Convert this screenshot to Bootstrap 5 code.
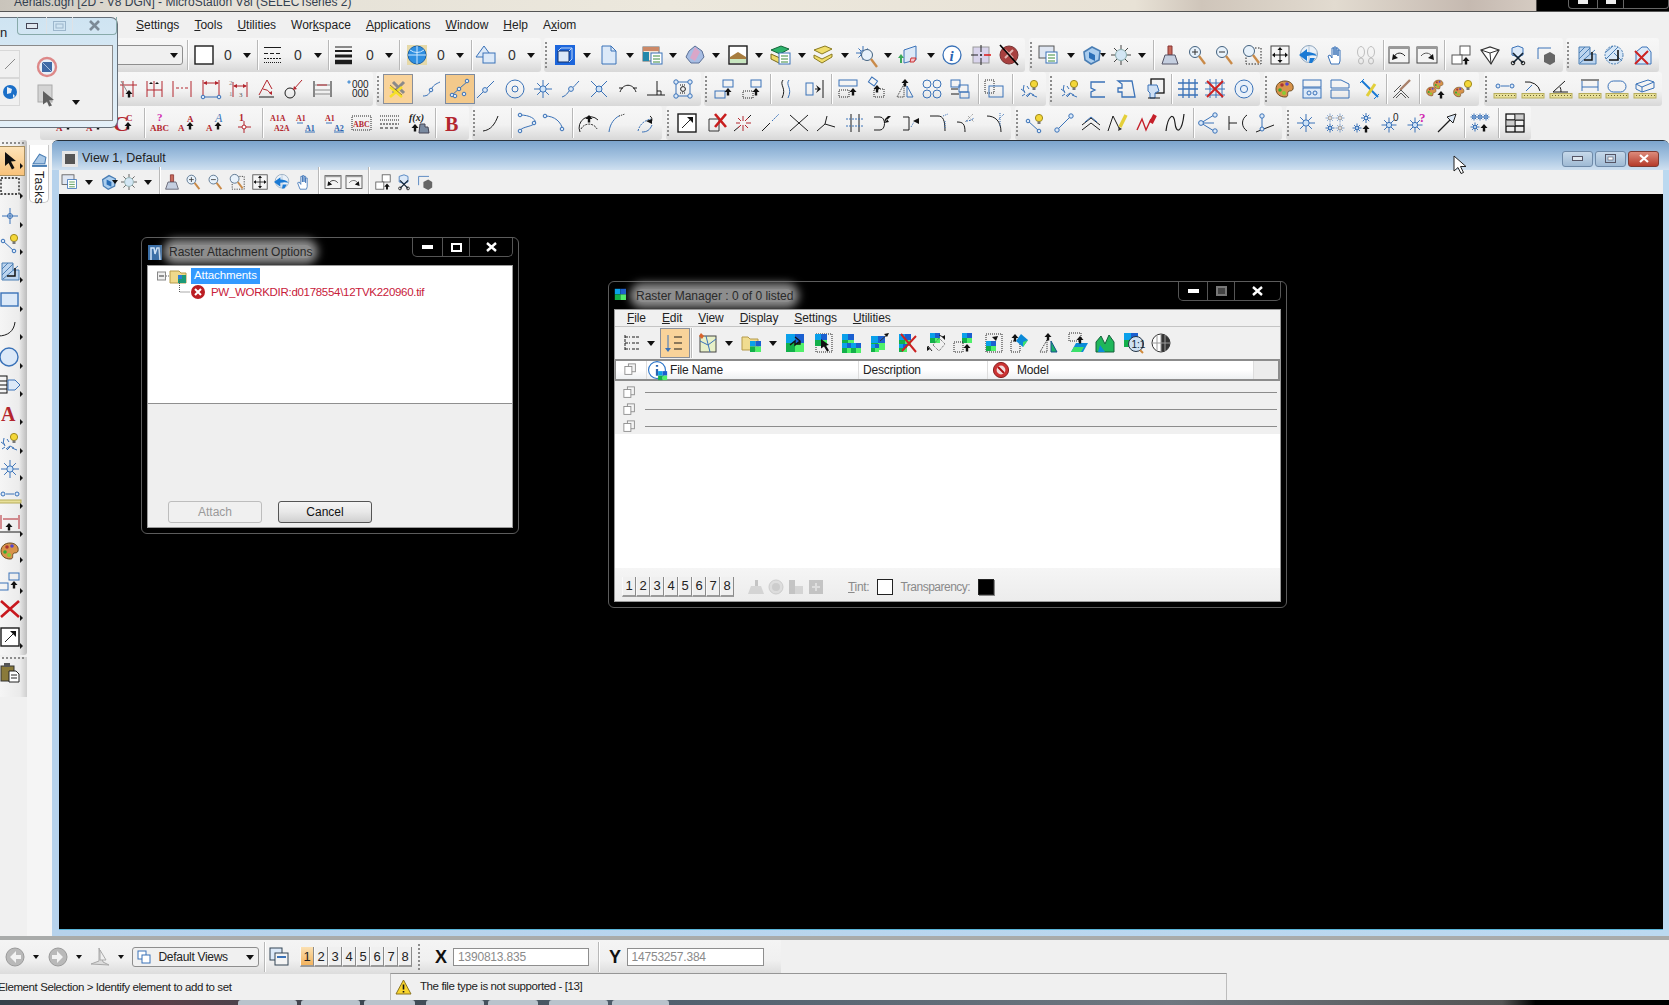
<!DOCTYPE html>
<html lang="en">
<head>
  <meta charset="UTF-8" />
  <title>Aerials.dgn [2D - V8 DGN] - MicroStation V8i (SELECTseries 2)</title>
  <link href="https://cdn.jsdelivr.net/npm/bootstrap@5.3.3/dist/css/bootstrap.min.css" rel="stylesheet">
  <style>
    html, body { width: 1669px; height: 1005px; margin: 0; overflow: hidden; }
    body { font-family: "Liberation Sans", Arial, sans-serif; font-size: 12px; color: #222; background: #f0f0f0; line-height: 1; }

    .titlestrip { height: 12px; overflow: hidden; padding-left: 14px; font-size: 12px; color: #33404f;
      background: linear-gradient(90deg, #c9c4bb 0, #e4e0d6 10%, #ece8dd 40%, #e8e2d6 68%, #cfc5ba 72%, #e2dbd0 80%, #c5b9b0 88%, #d5cbc2 92%, #000 92.1%); border-bottom: 1px solid #555; }
    .titlestrip > span { margin-top: -4px; display: block; white-space: nowrap; }
    .top-btns { width: 101px; height: 9px; border: 1px solid #666; border-top: 0; border-radius: 0 0 4px 4px; }
    .top-btns div { border-left: 1px solid #666; height: 100%; display: flex; justify-content: center; }
    .top-btns div:first-child { border-left: 0; }
    .top-btns i { display: block; width: 10px; height: 4px; background: #eee; }
    .menubar { height: 26px; padding-left: 136px; gap: 15px; font-size: 12px; }
    .menubar a { color: #222; text-decoration: none; }
    .tb-row { height: 34px; }
    .tb-group { height: 34px; flex: none; background: linear-gradient(#f7f7f7, #f2f2f2 55%, #d8d8d8); border-radius: 3px; }
    .cell { flex: none; display: flex; align-items: center; justify-content: center; }
    .tb-sep { width: 1px; height: 30px; background: #b8b8b8; box-shadow: 1px 0 0 #fff; }
    .tb-grip { width: 2px; height: 26px; background: repeating-linear-gradient(#8c8c8c 0 2px, transparent 2px 4px); }
    .caret { width: 0; height: 0; border: 4px solid transparent; border-top: 5px solid #111; border-bottom: 0; }
    .caret-sm { border-width: 3px; border-top-width: 4px; border-bottom: 0; }
    .zero { color: #333; font-size: 14px; }
    .ic { display: block; fill: none; overflow: visible; flex: none; }
    .ic .b { stroke: #3a72b8; }
    .ic .bl { stroke: #3a72b8; fill: #dce9f8; }
    .ic .k { stroke: #1c1c1c; }
    .ic .r { stroke: #b3262e; }
    .ic .g { stroke: #8a8a8a; }
    .ic .kf { fill: #111; }
    .ic .rf { fill: #b3262e; }
    .ic .w { fill: #fff; }
    .ic text { font-family: "Liberation Serif", serif; stroke: none; }
    .on { background: #f9d39a; box-shadow: 0 0 0 4px #f9d39a, 0 0 0 5px #8a8f9a; }
    .snap-on { background: #f3c98b; box-shadow: 0 0 0 4px #f3c98b, 0 0 0 5px #7b8aa0; }

    .combo { height: 20px; border: 1px solid #8e8e8e; border-radius: 3px; background: #f0f0f0; padding: 0 4px; display: flex; align-items: center; justify-content: space-between; font-size: 12px; }

    .workspace { height: 800px; border-bottom: 4px solid #a9abaa; }
    .palette-col { width: 27px; flex: none; }
    .pal-a { height: 515px; padding-top: 1px; background: linear-gradient(90deg, #f5f5f5, #ececec 70%, #bcbcbc); border-radius: 0 3px 3px 0; }
    .pal-b { height: 40px; margin-top: 2px; background: linear-gradient(90deg, #f5f5f5, #eaeaea 75%, #cfcfcf); }
    .pal-grip { height: 2px; margin: 1px 2px; background: repeating-linear-gradient(90deg, #8c8c8c 0 2px, transparent 2px 4px); }
    .pal-cell { position: relative; width: 27px; height: 20px; }
    .pal-cell::after { content: ""; position: absolute; left: 20px; top: 16px; border: 3px solid transparent; border-left: 3px solid #111; }
    .pal-cell.plain::after { display: none; }
    .pal-first { width: 24px; height: 28px; padding-top: 4px; background: linear-gradient(#fde3b8, #f9c27a); outline: 1px solid #a98f60; }
    .tasks-col { width: 25px; flex: none; background: #f5f5f5; padding: 5px 3px 0 2px; }
    .tasks-tab { height: 58px; background: #fff; border: 1px solid #c8c8c8; border-top: 0; border-radius: 0 0 5px 5px; padding-top: 3px; }
    .tasks-tab span { writing-mode: vertical-rl; font-size: 12px; letter-spacing: .5px; margin-top: 3px; }

    .view { background: linear-gradient(90deg, #b6d2ec, #bcd9f0); border-top: 1px solid #26303a; border-radius: 6px 6px 0 0; min-width: 0; }
    .view-title { height: 29px; background: linear-gradient(#7ba4cd, #a9c6e2 60%, #cfe0f0); border-radius: 5px 5px 0 0; padding: 6px 10px 0 13px; font-size: 12.5px; }
    .view-title .sq { width: 10px; height: 10px; background: #555; outline: 3px solid #e6e6e6; margin-right: 7px; }
    .win-btn { width: 31px; height: 16px; border: 1px solid #6f8aa8; border-radius: 3px; background: linear-gradient(#c7d9ea, #9fbad4); margin-left: 2px; }
    .win-btn.close { background: linear-gradient(#dd8b7b, #b53b2b); border-color: #7d3a32; }
    .view-body { margin: 0 6px 7px 7px; min-height: 0; box-shadow: 0 1px 0 #5ab5d9; }
    .view-tools { height: 24px; flex: none; background: #f0f0f0; }
    .canvas { background: #000; }

    .dlg { position: absolute; background: #000; border: 1px solid #5c5c5c; border-radius: 6px; padding: 0 5px 5px; display: flex; flex-direction: column; }
    .dlg-head { height: 27px; flex: none; color: #2a2a2a; }
    .glow { background: #8d8d8d; box-shadow: 0 0 9px 6px #8d8d8d; border-radius: 8px; margin-left: 6px; font-size: 12px; height: 13px; display: flex; align-items: center; }
    .glass-btns { height: 19px; border: 1px solid #555; border-top: 0; border-radius: 0 0 5px 5px; margin-left: auto; align-self: flex-start; }
    .glass-btns div { display: flex; align-items: center; justify-content: center; border-left: 1px solid #555; height: 100%; }
    .glass-btns div:first-child { border-left: 0; }
    .client { background: #fff; border: 1px solid #9a9a9a; min-height: 0; }

    .tree { height: 138px; flex: none; border-bottom: 1px solid #8f8f8f; background: #fff; padding: 2px 0 0 9px; }
    .tree-sel { background: #3399ff; color: #fff; padding: 2px 3px; font-size: 11.5px; height: 16px; margin-left: 1px; letter-spacing: -.1px; }
    .tree-err { color: #c8203a; font-size: 11.5px; letter-spacing: -.3px; }
    .dlg-foot { background: #efefef; padding: 0 0 4px 20px; gap: 16px; }
    .dlg-foot .btn { width: 94px; height: 22px; padding: 0; font-size: 12px; border-radius: 3px; line-height: 1; }
    .btn-cancel { background: linear-gradient(#f5f5f5, #e8e8e8 50%, #d0d0d0); border: 1px solid #555; color: #111; }
    .btn-attach { background: #f0f0f0; border: 1px solid #bdbdbd; color: #9a9a9a; }
    .btn-attach:disabled { background: #f0f0f0; border-color: #bdbdbd; color: #9a9a9a; opacity: 1; }

    .rm-menu { height: 17px; flex: none; padding-left: 12px; background: #f0f0f0; border-bottom: 1px solid #c4c4c4; font-size: 12px; letter-spacing: -.1px; }
    .rm-menu a { color: #222; text-decoration: none; }
    .rm-tools { height: 32px; flex: none; background: #f0f0f0; }
    .rm-head { height: 22px; flex: none; background: linear-gradient(#fff, #fff 50%, #eef0f2); border: 2px solid #8c8c8c; border-left: 1px solid #8c8c8c; font-size: 12px; letter-spacing: -.2px; }
    .rm-head .h { height: 100%; display: flex; align-items: center; border-right: 1px solid #ddd; }
    .rm-rows { height: 53px; flex: none; background: #f0f0f0; padding: 3px 3px 0 8px; }
    .rm-row { height: 17px; }
    .rm-row hr { flex: 1; margin: 0 0 0 8px; border: 0; border-top: 1px solid #8c8c8c; opacity: 1; }
    .rm-foot { height: 33px; flex: none; background: linear-gradient(#f5f5f5, #ececec); padding: 4px 0 0 7px; color: #8a8a8a; }
    .num { width: 14px; height: 20px; display: flex; align-items: center; justify-content: center; font-size: 13px; color: #222; background: #f0f0f0; border-right: 1px solid #8a8a8a; border-bottom: 2px solid #9a9a9a; border-left: 1px solid #f9f9f9; }
    .swatch { width: 16px; height: 16px; border: 1px solid #222; background: #fff; }
    .swatch-k { background: #000; box-shadow: 1px 1px 0 #888; }

    .float-win { position: absolute; left: 0; top: 17px; width: 118px; height: 111px; background: linear-gradient(#cfe4f2, #e4f0f8); border: 1px solid #66707a; border-left: 0; border-radius: 0 7px 7px 0; z-index: 5; }
    .float-head { height: 27px; font-size: 13px; }
    .float-btns { height: 18px; width: 102px; margin-left: 10px; margin-top: -1px; border: 1px solid #8aa; border-top: 0; border-radius: 0 0 4px 4px; }
    .float-body { position: relative; height: 76px; width: 113px; padding-top: 4px; background: #f0f0f0; border: 1px solid #8a8a8a; border-left: 0; }
    .float-cell { width: 20px; height: 28px; border: 1px solid #d8d8d8; border-left: 0; }

    .mouse { position: absolute; left: 1453px; top: 155px; z-index: 6; }

    .bottom-tools { height: 34px; background: #f0f0f0; }
    .bt-group { background: linear-gradient(#f4f4f4, #f0f0f0 60%, #dcdcdc); height: 34px; }
    .coord { width: 136px; height: 18px; padding: 0 4px; border: 1px solid #8e8e8e; border-radius: 0; font-size: 12px; color: #8a8a8a; background: #fff; letter-spacing: -.2px; }
    .coord:disabled { background: #fff; opacity: 1; }
    .axis { font-size: 18px; font-weight: 700; color: #111; }
    .statusbar { height: 26px; background: #f0f0f0; font-size: 11.5px; letter-spacing: -.4px; }
    .status-l { width: 392px; flex: none; overflow: hidden; padding-top: 2px; margin-left: -2px; }
    .status-m { width: 837px; flex: none; border-top: 1px solid #969696; border-left: 1px solid #bcbcbc; border-right: 1px solid #bcbcbc; margin-top: -1px; padding-left: 4px; gap: 8px; }
    .taskbar { height: 5px; background: linear-gradient(90deg, #35404a, #5a3f48 10%, #3b4650 20%, #51606e 40%, #6f7780 70%, #555 90%, #000 92%); padding-left: 238px; gap: 4px; }
    .taskbar div { height: 5px; background: #b9c3cc; border-radius: 3px 3px 0 0; }
  </style>
</head>
<body>

  <!-- title strip cut by the top of the picture -->
  <div class="titlestrip d-flex">
    <span>Aerials.dgn [2D - V8 DGN] - MicroStation V8i (SELECTseries 2)</span>
    <div class="top-btns d-flex ms-auto">
      <div style="width:28px"><i></i></div><div style="width:26px"><i></i></div><div class="flex-fill"></div>
    </div>
  </div>

  <!-- main menu -->
  <nav class="menubar d-flex align-items-center">
    <a href="#"><u>S</u>ettings</a>
    <a href="#"><u>T</u>ools</a>
    <a href="#"><u>U</u>tilities</a>
    <a href="#">Wor<u>k</u>space</a>
    <a href="#"><u>A</u>pplications</a>
    <a href="#"><u>W</u>indow</a>
    <a href="#"><u>H</u>elp</a>
    <a href="#">A<u>x</u>iom</a>
  </nav>

  <!-- tool bars, filled from the tables at the bottom -->
  <div class="tb-row d-flex" id="row1"></div>
  <div class="tb-row d-flex" id="row2"></div>
  <div class="tb-row d-flex" id="row3"></div>

  <div class="workspace d-flex">
    <div class="palette-col">
      <div class="pal-a"><div class="pal-grip"></div><div id="pal"></div></div>
      <div class="pal-b"><div class="pal-grip"></div><div id="pal2"></div></div>
    </div>
    <div class="tasks-col">
      <div class="tasks-tab d-flex flex-column align-items-center">
        <span data-i="tasks"></span>
        <span>Tasks</span>
      </div>
    </div>

    <div class="view flex-fill d-flex flex-column">
      <div class="view-title d-flex align-items-center flex-none">
        <div class="sq"></div>
        <div>View 1, Default</div>
        <div class="win-btn d-flex align-items-center justify-content-center ms-auto"><svg width="11" height="5"><rect x=".5" y=".5" width="10" height="4" fill="#dfe7ef" stroke="#556"/></svg></div>
        <div class="win-btn d-flex align-items-center justify-content-center"><svg width="11" height="9"><rect x=".5" y=".5" width="10" height="8" fill="none" stroke="#556"/><rect x="3" y="3" width="5" height="3" fill="#fff" stroke="#556" stroke-width=".6"/></svg></div>
        <div class="win-btn close d-flex align-items-center justify-content-center"><svg width="12" height="9"><path d="M2 1l8 7M10 1l-8 7" stroke="#fff" stroke-width="2.2"/></svg></div>
      </div>
      <div class="view-body flex-fill d-flex flex-column">
        <div class="view-tools d-flex" id="viewtools"></div>
        <div class="canvas flex-fill position-relative">

          <!-- Raster Attachment Options -->
          <div class="dlg" style="left:82px;top:43px;width:378px;height:297px">
            <div class="dlg-head d-flex align-items-center">
              <span data-i="mslogo"></span>
              <div class="glow">Raster Attachment Options</div>
              <div class="glass-btns d-flex" style="width:101px">
                <div style="width:29px"><svg width="11" height="4"><rect width="11" height="4" fill="#fff"/></svg></div>
                <div style="width:27px"><svg width="11" height="9"><rect x="1" y="1" width="9" height="7" fill="none" stroke="#fff" stroke-width="2"/></svg></div>
                <div class="flex-fill"><svg width="11" height="10"><path d="M1 1l9 8M10 1l-9 8" stroke="#fff" stroke-width="2.4"/></svg></div>
              </div>
            </div>
            <div class="client flex-fill d-flex flex-column">
              <div class="tree">
                <div class="d-flex align-items-center">
                  <svg class="ic" width="33" height="16"><rect x=".5" y="4" width="8" height="8" fill="#f0f0f0" stroke="#888"/><path d="M2 8h5" stroke="#333"/><path d="M9 8h4" stroke="#666" stroke-dasharray="1 1"/><path d="M13 3h9l2 2h5v10H13z" fill="#efd98b" stroke="#b59a4b"/><rect x="21" y="7" width="8" height="8" fill="#1c9a78"/><rect x="21" y="7" width="4" height="4" fill="#2c7fd6"/></svg>
                  <div class="tree-sel d-flex align-items-center">Attachments</div>
                </div>
                <div class="d-flex align-items-center" style="height:17px">
                  <svg class="ic" width="32" height="17" style="margin-left:22px"><path d="M.5 -3v11h11" stroke="#555" stroke-dasharray="1 1"/><circle cx="19" cy="8" r="7" fill="#bb1e24"/><path d="M16 5l6 6M22 5l-6 6" stroke="#fff" stroke-width="2"/></svg>
                  <div class="tree-err">PW_WORKDIR:d0178554\12TVK220960.tif</div>
                </div>
              </div>
              <div class="dlg-foot flex-fill d-flex align-items-end">
                <button class="btn btn-attach" disabled>Attach</button>
                <button class="btn btn-cancel">Cancel</button>
              </div>
            </div>
          </div>

          <!-- Raster Manager -->
          <div class="dlg" style="left:549px;top:87px;width:679px;height:327px">
            <div class="dlg-head d-flex align-items-center">
              <span data-i="rastlogo"></span>
              <div class="glow">Raster Manager : 0 of 0 listed</div>
              <div class="glass-btns d-flex" style="width:103px">
                <div style="width:28px"><svg width="11" height="4"><rect width="11" height="4" fill="#fff"/></svg></div>
                <div style="width:27px"><svg width="11" height="10"><rect x="1" y="1" width="9" height="8" fill="#444" stroke="#777" stroke-width="2"/></svg></div>
                <div class="flex-fill"><svg width="11" height="10"><path d="M1 1l9 8M10 1l-9 8" stroke="#fff" stroke-width="2.4"/></svg></div>
              </div>
            </div>
            <div class="client flex-fill d-flex flex-column">
              <div class="rm-menu d-flex align-items-center">
                <a href="#"><u>F</u>ile</a>
                <a href="#" class="ms-3"><u>E</u>dit</a>
                <a href="#" class="ms-3"><u>V</u>iew</a>
                <a href="#" class="ms-3"><u>D</u>isplay</a>
                <a href="#" class="ms-3"><u>S</u>ettings</a>
                <a href="#" class="ms-3"><u>U</u>tilities</a>
              </div>
              <div class="rm-tools d-flex" id="rmtools"></div>
              <div class="rm-head d-flex align-items-center">
                <div class="h" style="width:31px;padding-left:8px"><span data-i="copies"></span></div>
                <div class="h" style="width:212px;padding-left:1px"><span data-i="filei" class="me-1"></span>File Name</div>
                <div class="h" style="width:129px;padding-left:4px">Description</div>
                <div class="h" style="width:266px;padding-left:5px"><span data-i="noentry" class="me-2"></span>Model</div>
                <div class="flex-fill align-self-stretch" style="background:#ececec"></div>
              </div>
              <div class="rm-rows">
                <div class="rm-row d-flex align-items-center"><span data-i="copies"></span><hr></div>
                <div class="rm-row d-flex align-items-center"><span data-i="copies"></span><hr></div>
                <div class="rm-row d-flex align-items-center"><span data-i="copies"></span><hr></div>
              </div>
              <div class="flex-fill"></div>
              <div class="rm-foot d-flex align-items-center">
                <div class="d-flex">
                  <div class="num">1</div><div class="num">2</div><div class="num">3</div><div class="num">4</div>
                  <div class="num">5</div><div class="num">6</div><div class="num">7</div><div class="num">8</div>
                </div>
                <div class="d-flex align-items-center gap-1" style="margin-left:14px;opacity:.5">
                  <span data-i="fade1"></span><span data-i="fade2"></span><span data-i="fade3"></span><span data-i="fade4"></span>
                </div>
                <div style="margin-left:24px;letter-spacing:-.3px"><u>T</u>int:</div>
                <div class="swatch" style="margin-left:8px"></div>
                <div style="margin-left:7px;letter-spacing:-.5px">Transparency:</div>
                <div class="swatch swatch-k" style="margin-left:8px"></div>
              </div>
            </div>
          </div>

        </div>
      </div>
    </div>
  </div>

  <div class="bottom-tools d-flex" id="bottom"></div>

  <div class="statusbar d-flex">
    <div class="status-l d-flex align-items-center">Element Selection &gt; Identify element to add to set</div>
    <div class="status-m d-flex align-items-center">
      <svg class="ic" width="17" height="16"><path d="M8.5 1L16 15H1z" fill="#f8d42c" stroke="#8a7320"/><path d="M8.5 5.5v5M8.5 12v1.6" stroke="#111" stroke-width="1.6"/></svg>
      <div>The file type is not supported - [13]</div>
    </div>
  </div>

  <div class="taskbar d-flex">
    <div style="width:59px"></div><div style="width:59px"></div><div style="width:51px"></div><div style="width:58px;margin-left:7px"></div>
    <div style="width:50px"></div><div style="width:59px;margin-left:7px"></div><div style="width:57px"></div>
  </div>

  <!-- floating settings window -->
  <div class="float-win">
    <div class="float-head d-flex">
      <span style="margin-top:8px">n</span>
      <div class="float-btns d-flex">
        <div class="d-flex align-items-center justify-content-center border-end" style="width:29px"><svg width="12" height="6"><rect x=".5" y=".5" width="11" height="5" fill="#dfe7ef" stroke="#445"/></svg></div>
        <div class="d-flex align-items-center justify-content-center border-end" style="width:26px"><svg width="13" height="10" opacity=".5"><rect x=".5" y=".5" width="12" height="9" fill="none" stroke="#6a8aa8"/><rect x="3" y="3" width="7" height="4" fill="none" stroke="#6a8aa8"/></svg></div>
        <div class="flex-fill d-flex align-items-center justify-content-center"><svg width="13" height="11"><path d="M2 1l9 9M11 1l-9 9" stroke="#7d8a96" stroke-width="2.6"/></svg></div>
      </div>
    </div>
    <div class="float-body d-flex">
      <div>
        <div class="float-cell d-flex align-items-center justify-content-center"><svg width="14" height="14"><path d="M2 12L12 2" stroke="#8a8a8a"/></svg></div>
        <div class="float-cell d-flex align-items-center justify-content-center"><span data-i="earth"></span></div>
      </div>
      <div class="d-flex flex-column align-items-center" style="margin:7px 0 0 17px;gap:7px">
        <span data-i="nosym"></span>
        <span data-i="grayptr"></span>
      </div>
      <div class="caret" style="margin:50px 0 0 15px"></div>
    </div>
  </div>

  <!-- mouse pointer -->
  <svg class="mouse" width="14" height="20"><path d="M1 1v15l4-3.5 3 6 2.5-1-3-6H13z" fill="#fff" stroke="#222"/></svg>

  <script>
    // little drawing helpers for the icons, all on a 20x20 box
    const up = (x, y) => `<path class="kf" d="M${x} ${y}l3.5 4H${x + 1.2}v3.5h-2.4V${y + 4}H${x - 3.5}z"/>`;
    const n = (x, y, r = 1.8) => `<circle class="bl" cx="${x}" cy="${y}" r="${r}"/>`;
    const lines = (cls, d, extra = '') => `<path class="${cls}" d="${d}" ${extra}/>`;
    const ruler = '<rect x="-1" y="14.5" width="22" height="4.5" fill="#e8e09a" stroke="#b7ad5b"/><path stroke="#6b6433" stroke-dasharray="1 2" d="M1 16.5h19"/>';
    const star = (x, y, s = 8) => `<path class="b" d="M${x - s} ${y}h${s * 2}M${x} ${y - s}v${s * 2}M${x - s * .65} ${y - s * .65}l${s * 1.3} ${s * 1.3}M${x + s * .65} ${y - s * .65}l${-s * 1.3} ${s * 1.3}"/><circle cx="${x}" cy="${y}" r="${s * .35}" fill="#cfe3f7" stroke="#3a72b8"/>`;
    const bulb = (x, y) => `<circle cx="${x}" cy="${y}" r="3.6" fill="#f4d738" stroke="#a08a1e"/><rect x="${x - 1.5}" y="${y + 3.4}" width="3" height="2.6" fill="#777"/>`;
    const tx = (x, y, s, fill, str, extra = '') => `<text x="${x}" y="${y}" font-size="${s}" fill="${fill}" ${extra}>${str}</text>`;
    const pal = '<path d="M10 2c6 0 9 4 8 8-1 3-4 1-5 3s1 5-3 5c-5 0-9-3-9-8s4-8 9-8z" fill="#d8934a" stroke="#6a4a20"/><circle cx="7" cy="6" r="1.8" fill="#a33"/><circle cx="12" cy="5" r="1.8" fill="#54c"/><circle cx="5" cy="11" r="1.8" fill="#3a3"/><circle cx="9" cy="14" r="2" fill="#8c3"/>';
    const rg = (x, y, s = 6) => `<rect x="${x}" y="${y}" width="${s}" height="${s}" fill="#0aa0ea"/><rect x="${x + s}" y="${y}" width="${s}" height="${s}" fill="#1a5fd0"/><rect x="${x}" y="${y + s}" width="${s}" height="${s}" fill="#12b04a"/><rect x="${x + s}" y="${y + s}" width="${s}" height="${s}" fill="#4ff06a"/>`;
    const list = (x, y) => `<rect x="${x}" y="${y}" width="11" height="11" fill="#fff" stroke="#3a72b8"/><path stroke="#3a8a3a" d="M${x + 2} ${y + 3}h7M${x + 2} ${y + 6}h7M${x + 2} ${y + 9}h7"/>`;
    const mag = (x, y) => `<circle cx="${x}" cy="${y}" r="5.5" fill="#e8f2fb" stroke="#42617f"/><path d="M${x + 4} ${y + 4}l6 8" stroke="#c98a48" stroke-width="2.4"/>`;

    const icons = {
      color: '<rect class="k w" x="1" y="1" width="18" height="18" stroke-width="1.4"/>',
      lstyle: lines('k', 'M1 2.5h17') + lines('k', 'M1 8.5h17', 'stroke-dasharray="4 2"') + lines('k', 'M1 13.5h17', 'stroke-dasharray="2 1"') + lines('k', 'M1 17.5h17', 'stroke-dasharray="1 1"'),
      weight: lines('k', 'M1 2h17') + lines('k', 'M1 6h17', 'stroke-width="2"') + lines('k', 'M1 11h17', 'stroke-width="3"') + lines('k', 'M1 17h17', 'stroke-width="4.5"'),
      globe: '<rect width="20" height="20" fill="#e6d9a8"/><circle cx="10" cy="10" r="9" fill="#2f8fe0" stroke="#1a5fa8"/><path stroke="#cfe8ff" d="M1 10h18M10 1v18M3 5q7 5 14 0"/>',
      tri: '<path class="bl" d="M8 1l8 11H0z"/><rect class="bl" x="7" y="8" width="12" height="10"/>',
      bluebox: '<rect x="0" y="0" width="20" height="20" fill="#1d66dc"/><rect x="3" y="6" width="11" height="11" fill="#dbe8f8" stroke="#12306a"/><path d="M3 6l3-3h11v11l-3 3M14 6l3-3" stroke="#bcd4f4"/>',
      doc: '<path class="bl" d="M3 1h9l5 5v13H3z"/><path class="b" d="M12 1v5h5"/>',
      refs: '<rect x="1" y="2" width="16" height="14" fill="#f4e6d8" stroke="#666"/><rect x="1" y="2" width="16" height="4" fill="#c86"/><rect x="1" y="7" width="6" height="9" fill="#28a"/>' + list(9, 8),
      blob: '<path d="M4 6l6-5 7 5 2 6-5 6-8 0-5-6z" fill="#a7bde3" stroke="#5a6f96"/><path d="M10 2l5 5-5 9-5-3z" fill="#d9a6c8"/>',
      pict: '<rect class="k w" x="1" y="1" width="18" height="18" stroke-width="1.4"/><path d="M2 12l8-5 8 5v6H2z" fill="#a87d3f"/><path d="M2 14h16v4H2z" fill="#c8e6c0"/>',
      greens: '<path d="M1 5l10-4 8 3-9 5z" fill="#2db36b" stroke="#14663a"/><path d="M1 9l9 4 4-1v4l-5 2-8-4z" fill="#ecd96a" stroke="#7a6a1e"/>' + list(9, 8),
      yellows: '<path d="M1 5l11-4 7 3-10 5z M1 10l8 4 10-5v3L9 18l-8-5z" fill="#f0dd6a" stroke="#8a7a20"/>',
      starmag: star(7, 8, 7) + mag(11, 10),
      views3: '<path class="bl" d="M6 5l12-4v14l-12 3z"/><path d="M3 9l3 4h-2v5H2v-5H0z" fill="#3aa85a"/><path d="M13 13h5l-2 4h-4z" fill="#f4c0c8" stroke="#c33"/>',
      info: '<circle class="b w" cx="10" cy="10" r="9" stroke-width="1.3"/>' + tx(7.5, 15.5, 15, '#2a63b0', 'i', 'font-style="italic" font-weight="700"'),
      cross: '<rect x="2" y="2" width="16" height="16" fill="#d9d4ec" stroke="#999"/><path stroke="#222" d="M10 0v7M10 13v7M0 10h7"/><path stroke="#d22" stroke-width="1.6" d="M13 10h7"/><circle cx="10" cy="10" r="1" fill="#111"/>',
      nope: '<circle cx="10" cy="10" r="9" fill="#a8403f" stroke="#733"/><path d="M6 5l8 8M14 5l-8 8" stroke="#e2b4b0" stroke-width="2"/><path d="M1 0l18 20" stroke="#000" stroke-width="1.6"/>',
      vlist: '<rect x="0" y="1" width="15" height="12" fill="#dfe6f2" stroke="#555"/>' + list(7, 7),
      cube: '<path d="M2 7l8-5 8 4-1 9-8 4-6-4z" fill="#aacdee" stroke="#4a7eb4" stroke-width="1.6"/><path d="M7 7l6 3v6l-6-3z" fill="#2a6fb8"/>',
      sun: '<circle cx="10" cy="10" r="5.5" fill="#d3e6f4" stroke="#8aa"/><path stroke="#444" d="M10 0v4M10 16v4M0 10h4M16 10h4M3 3l3 3M17 3l-3 3M3 17l3-3M17 17l-3-3"/>',
      brush: '<path d="M8 1h4v9H8z" fill="#c76a5a" stroke="#833"/><path d="M5 10h10l3 9H2z" fill="#c5cfe0" stroke="#556"/>',
      zin: mag(8, 7) + '<path stroke="#333" d="M5 7h6M8 4v6"/>',
      zout: mag(8, 7) + '<path stroke="#333" d="M5 7h6"/>',
      zwin: '<rect x="4" y="3" width="15" height="16" stroke="#222" stroke-dasharray="1.5 1.5"/>' + mag(7, 6),
      fit: '<rect x="1" y="1" width="18" height="18" fill="#f6f6f6" stroke="#444"/><path stroke="#111" d="M10 3v14M3 10h14"/><path class="kf" d="M10 2l2.5 3h-5zM10 18l2.5-3h-5zM2 10l3-2.5v5zM18 10l-3-2.5v5z"/>',
      rotate: '<circle cx="10" cy="9" r="8.5" fill="#eaf1f8" stroke="#8fa6bd"/><path d="M10 1v17M2 9h16" stroke="#b4c5d6"/><path d="M0 10l8-6v3c4 0 8 1 10 4-3-1-6-1-10 0v5z" fill="#1979d4"/><path d="M11 13h5l-3 5h-3z" fill="#1979d4"/>',
      hand: '<path class="bl w" d="M5 19l-3-8 2-1 2 3V3h2v7-8h2v8-7h2v8-6h2v11l-1 3z"/>',
      feet: '<g opacity=".5"><ellipse class="g" cx="5" cy="7" rx="3.5" ry="5.5"/><ellipse class="g" cx="5" cy="16" rx="2.5" ry="3"/><ellipse class="g" cx="15" cy="7" rx="3.5" ry="5.5"/><ellipse class="g" cx="15" cy="16" rx="2.5" ry="3"/></g>',
      prev: '<rect x="0" y="2" width="20" height="16" fill="#f4f4f4" stroke="#444"/><path d="M0 2h20v2H0z" fill="#999"/><path stroke="#222" d="M5 12c2-5 8-5 11-1"/><path class="kf" d="M3 15l1-6 5 4z"/>',
      next: '<rect x="0" y="2" width="20" height="16" fill="#f4f4f4" stroke="#444"/><path d="M0 2h20v2H0z" fill="#999"/><path stroke="#555" d="M4 11c3-4 9-4 11 1"/><path class="kf" d="M17 15l-1-6-5 4z"/>',
      copyv: '<rect class="w" x="9" y="1" width="10" height="9" stroke="#555"/><rect class="w" x="1" y="10" width="10" height="9" stroke="#555"/>' + up(15, 12),
      cone: '<path d="M1 5l9-3 9 3-8 14z" fill="#fff" stroke="#333" stroke-width="1.2"/><path d="M1 5l9 3 9-3M10 8l1 11" stroke="#333"/>',
      cubex: '<path class="bl" d="M4 3l6-2 5 2v7l-5 2-6-2z"/><path stroke="#123" stroke-width="1.6" d="M5 8l10 10M15 8L5 18"/><circle cx="5" cy="18" r="1.8" class="k"/><circle cx="15" cy="18" r="1.8" class="k"/>',
      cubew: '<path class="b" d="M2 14V3h13"/><path d="M8 10l6-3 5 3v7l-5 3-6-3z" fill="#666"/>',
      hatch: '<path d="M2 19V2l11 0v7h6v10z" fill="#bcd4ee" stroke="#4a7eb4"/><path stroke="#4a7eb4" d="M2 8l6-6M2 14l11-11M3 18L18 5"/><path stroke="#111" stroke-width="1.5" d="M7 15h8V7"/>',
      xhatch: '<circle cx="10" cy="10" r="9" fill="#d7e7f7" stroke="#4a7eb4" stroke-dasharray="2 1"/><path stroke="#4a7eb4" d="M2 7l7-6M2 14l12-12M10 8l8 8"/><path stroke="#111" stroke-width="1.6" d="M5 15h9V5"/>',
      xhdel: '<path class="bl" d="M3 7l6-5h5l4 5v12H3z"/><path stroke="#c22" stroke-width="2" d="M2 6l13 13M15 6L2 19"/>',

      // dimension bar
      d1: lines('r', 'M3 2v16M13 2v16M0 6h17') + lines('g', 'M1 2l7 12') + up(9, 11),
      d2: lines('r', 'M2 2v16M17 2v16M9 2v16M2 11h15') + '<path class="kf" d="M8 5l-4 0 2-2zM10 5l4 0-2-2z"/>',
      d3: lines('r', 'M1 2v16M19 2v16M4 9h3M9 9h2M13 9h3'),
      d4: lines('r', 'M2 17V1M18 17V1M3 4h14') + '<path class="rf" d="M2 4l4-2v4zM18 4l-4-2v4z"/>' + lines('b', 'M3 18h14') + n(2, 18) + n(18, 18),
      d5: lines('r', 'M4 3v15M18 3v15M5 7h12') + '<path class="rf" d="M4 7l4-2v4zM18 7l-4-2v4z"/>' + tx(0, 6, 7, '#888', '2') + tx(0, 17, 7, '#888', '1') + tx(10, 18, 7, '#555', '3'),
      d6: lines('r', 'M1 16L9 1l5 9') + lines('r', 'M5 10q5 0 8 5') + '<path class="rf" d="M14 16l-3-2 3-2z"/>' + lines('k', 'M1 18h15'),
      d7: '<circle class="k" cx="7" cy="14" r="5"/>' + lines('r', 'M19 1L11 10') + '<path class="rf" d="M10 11l4-1-3-3z"/>',
      d8: lines('k', 'M1 2v16M18 2v16') + lines('g', 'M1 6h17M1 11h17M1 15h17') + lines('r', 'M4 6h10'),
      d000: '<path fill="#5a9ad8" d="M2 1l2 2-2 2-2-2z"/>' + tx(5, 9, 10, '#222', '000', 'style="font-family:\'Liberation Sans\'"') + tx(5, 18, 10, '#222', '000', 'style="font-family:\'Liberation Sans\'"'),

      // snaps
      snapx: '<path stroke="#8a8a8a" stroke-width="3" d="M5 3l11 11M16 3L5 14"/><path stroke="#f6e028" stroke-width="2.6" d="M2 8l12 10M14 8L2 18"/><path stroke="#5a5010" stroke-width=".6" d="M2 6l12 10"/>',
      s1: lines('b', 'M1 17c5 0 6-2 8-6 2-5 5-6 9-8') + n(9, 11),
      skey: '<path class="b" d="M2 16L18 2"/>' + n(2, 16) + n(17, 2) + n(9, 10) + n(14, 15) + n(5, 17),
      s2: lines('b', 'M1 19L18 2') + n(9, 11, 2.4),
      s3: '<circle class="b" cx="10" cy="10" r="9"/><circle class="b" cx="10" cy="10" r="3"/>',
      s4: star(10, 10, 9),
      s5: lines('b', 'M1 18c6-2 6-6 9-8s5-5 8-8') + n(10, 10, 2.4),
      s6: lines('b', 'M2 2l16 16M18 2L2 18') + '<circle cx="10" cy="10" r="3" fill="#cfe3f7" stroke="#3a72b8"/>',
      s7: lines('k', 'M1 9h4M15 9h4') + lines('k', 'M2 13C5 4 15 4 18 13'),
      s8: lines('k', 'M1 16h18M11 2v14M11 12h4v4'),
      s9: '<rect class="b" x="3" y="3" width="14" height="14"/>' + n(3, 3, 2.2) + n(17, 3, 2.2) + n(3, 17, 2.2) + n(17, 17, 2.2) + '<circle class="k" cx="10" cy="10" r="2.4"/><path stroke="#111" stroke-dasharray="1 1" d="M7 6h6M7 14h6"/>',

      // manipulate bars
      c1: '<rect class="b" x="9" y="1" width="10" height="7"/><rect class="b" x="1" y="12" width="10" height="7"/>' + up(14, 9),
      c2: '<rect class="b" x="9" y="1" width="10" height="7"/><rect x="1" y="12" width="10" height="7" stroke="#222" stroke-dasharray="1 1"/>' + up(14, 9),
      c3: lines('k', 'M7 1C3 6 11 9 6 19') + lines('b', 'M13 1c-4 5 4 8-1 18'),
      c4: '<rect class="b" x="1" y="4" width="7" height="12"/>' + lines('k', 'M18 1v18M10 10h5') + '<path class="kf" d="M16 10l-5-4 2 4-2 4z"/>',
      c5: '<rect class="b" x="1" y="1" width="18" height="6"/><rect x="1" y="11" width="10" height="7" stroke="#222" stroke-dasharray="1 1"/>' + up(15, 9),
      c6: '<rect class="b" x="3" y="-1" width="7" height="6" transform="rotate(35 6 3)"/><rect x="8" y="10" width="10" height="8" stroke="#222" stroke-dasharray="1 1"/>' + up(11, 6),
      c7: '<path d="M9 5L2 18h7z" stroke="#222" stroke-dasharray="1 1"/><path class="b" d="M12 7l6 11h-6z"/>' + up(10, 0),
      c8: '<circle class="b" cx="5" cy="5" r="4"/><circle class="b" cx="15" cy="5" r="4"/><circle class="b" cx="5" cy="15" r="4"/><circle class="b" cx="15" cy="15" r="4"/>',
      c9: '<rect class="b" x="1" y="1" width="9" height="7"/><rect class="b" x="9" y="6" width="9" height="7"/><rect class="b" x="10" y="13" width="9" height="6"/>' + lines('k', 'M1 10h7M1 15h8'),
      c10: '<rect x="1" y="1" width="9" height="13" stroke="#222" stroke-dasharray="1 1"/><rect class="b" x="5" y="7" width="14" height="11"/>',
      bulbstar: bulb(14, 5) + lines('b', 'M1 10l4 3M7 7l2 3M10 15l-3 3M2 17l3-2M12 16l5 2') + '<path class="b" d="M4 6a8 8 0 0 0 1 8"/>' + '<path class="b" d="M6 17l4-3 4 2"/>',
      e1: lines('b', 'M18 3H4v6l4 2-4 2v5h14', 'stroke-width="1.3"'),
      e2: lines('b', 'M2 2h14l3 16H6v-5H2V9h4V5z', 'stroke-width="1.3"'),
      e3: '<rect x="6" y="0" width="13" height="14" stroke="#111" stroke-width="1.3"/><path class="b" d="M3 6h9l2 6-4 2v5H5v-5L3 12z" fill="#cfe0f4"/>' + lines('k', 'M3 19h12'),
      grid: lines('b', 'M5 0v19M11 0v19M17 0v19M0 4h20M0 10h20M0 16h20', 'stroke-width="1.3"'),
      gridx: lines('b', 'M5 0v19M11 0v19M17 0v19M0 4h20M0 10h20M0 16h20') + '<path stroke="#c22" stroke-width="2" d="M2 2l16 16M18 2L2 18"/>',
      ring: '<circle cx="10" cy="10" r="9" fill="#e9f0f8" stroke="#3a72b8"/><circle cx="10" cy="10" r="3.6" class="b"/>',
      palette: pal,
      cell1: '<rect class="b" x="1" y="1" width="18" height="7"/><rect class="bl" x="1" y="9" width="18" height="10"/><circle class="b" cx="7" cy="14" r="2"/><circle class="b" cx="13" cy="14" r="2"/>',
      cell2: '<path class="b" d="M1 9V1h10l8 4v4zM1 11h18v8H1z"/>',
      sat: '<path stroke="#1979d4" stroke-width="2" d="M2 2l16 16"/><path stroke="#1979d4" d="M0 4l4-4M14 20l5-5"/><path stroke="#e2cf3a" stroke-width="3" d="M15 5L7 17"/>',
      trowel: '<path stroke="#a8806a" stroke-width="2.4" d="M18 1L8 11"/><path stroke="#555" d="M2 13l7-7M1 19l8-8 8 8M4 19l5-5 5 5"/>',
      pal2up: '<g transform="translate(7 0) scale(.55)">' + pal + '</g><g transform="translate(0 7) scale(.55)">' + pal + '</g>' + up(15, 12),
      pal2b: '<g transform="translate(0 7) scale(.6)">' + pal + '</g>' + bulb(15, 5),
      m1: ruler + lines('b', 'M6 7h8') + n(3, 7, 2) + n(17, 7, 2),
      m2: ruler + lines('k', 'M2 3a13 11 0 0 1 15 9') + lines('b', 'M3 12l6-6'),
      m3: ruler + lines('k', 'M2 13h15M2 13L14 2') + lines('k', 'M10 13a9 9 0 0 0-1-5'),
      m4: ruler + lines('k', 'M1 1h18') + lines('b', 'M2 8h16M2 2v10M18 2v10'),
      m5: ruler + '<rect class="b" x="1" y="2" width="18" height="11" rx="5.5"/>',
      m6: ruler + '<path class="b" d="M1 5l12-4 6 2v6l-12 4-6-3zM1 5l6 3 12-5M7 8v5"/>',

      // text bar
      bigC: tx(0, 18, 22, '#b3262e', 'C', 'font-weight="700"') + tx(13, 8, 9, '#b3262e', 'C', 'font-weight="700"') + up(15, 9),
      qABC: tx(6, 8, 11, '#d02ab0', '?', 'font-weight="700"') + tx(-1, 18, 9, '#b3262e', 'ABC', 'font-weight="700"'),
      Aup: tx(0, 18, 9, '#b3262e', 'A', 'font-weight="700"') + tx(9, 9, 9, '#b3262e', 'A', 'font-weight="700"') + up(12, 9),
      Aa: tx(0, 18, 9, '#b3262e', 'A', 'font-weight="700"') + tx(9, 9, 12, '#3a72b8', 'A', 'font-style="italic"') + up(12, 9),
      one: tx(5, 8, 10, '#b3262e', '1', 'font-weight="700"') + lines('r', 'M4 14h13M10 8v12') + '<circle cx="10" cy="14" r="2" fill="#fff" stroke="#b3262e"/>',
      a1a: tx(0, 8, 8, '#b3262e', 'A1A', 'font-weight="700"') + tx(4, 18, 8, '#b3262e', 'A2A', 'font-weight="700"'),
      a1a1: tx(0, 8, 8, '#b3262e', 'A1', 'font-weight="700"') + tx(9, 18, 8, '#2a63b0', 'A1', 'font-weight="700"') + lines('b', 'M1 10h6M9 19h10'),
      a1a2: tx(0, 8, 8, '#b3262e', 'A1', 'font-weight="700"') + tx(9, 18, 8, '#2a63b0', 'A2', 'font-weight="700"') + lines('b', 'M1 10h6M9 19h10'),
      dabc: '<rect x="0" y="3" width="19" height="14" stroke="#222" stroke-dasharray="1 1"/>' + tx(1, 14, 8, '#b3262e', 'ABC', 'font-weight="700"'),
      dlines: lines('k', 'M0 3h19M0 7h19', 'stroke-dasharray="1 1"') + lines('k', 'M0 11h19', 'stroke-dasharray="2 1"') + lines('k', 'M0 15h19', 'stroke-dasharray="3 2"'),
      fx: tx(-1, 8, 10, '#222', 'f(x)', 'font-style="italic" font-weight="700"') + up(5, 11) + '<path fill="#7a8aa0" stroke="#445" d="M10 11h5v3h3l1 6H9z"/>',
      B: tx(2, 18, 20, '#b3262e', 'B', 'font-weight="700"'),
      crv: lines('k', 'M2 18c8-1 12-7 15-15'),
      p1: lines('b', 'M3 2c12 0 18 6 14 9S4 14 3 18') + n(3, 2) + n(17, 10) + n(3, 18),
      p2: lines('b', 'M1 3c10 0 16 6 18 14') + n(1, 3) + n(18, 16),
      a1: lines('k', 'M2 16a9 9 0 0 1 16 0', 'stroke-dasharray="2 1"') + lines('k', 'M1 19a11 11 0 0 1 18-12') + up(10, 2),
      a2: lines('b', 'M2 19C3 10 8 5 12 3') + lines('k', 'M12 3l6-2', 'stroke-dasharray="1 1"'),
      a3: lines('b', 'M1 18c2-8 8-11 13-12', 'stroke-dasharray="2 1"') + lines('b', 'M5 19c5 0 8-2 10-7') + '<path class="k" d="M13 3a4 4 0 0 1 1 6"/><path class="kf" d="M9 8l6 3 0-5z"/>',
      boxarr: '<rect class="k w" x="1" y="1" width="18" height="18" stroke-width="1.4"/><path stroke="#222" d="M5 15l9-9"/><path class="kf" d="M16 4h-6l6 6z"/>',
      delx: '<path d="M2 6h10v12H2z" stroke="#333"/><path stroke="#c81e1e" stroke-width="2.6" d="M8 1l11 13M19 1L8 14"/>',
      rstar: lines('k', 'M1 18L7 13M13 7L18 2') + lines('r', 'M10 3v5M10 12v6M3 10h4M13 10h5M5 5l3 3M15 15l-3-3M15 5l-3 3M5 15l3-3'),
      t1: lines('k', 'M1 18L9 10') + lines('b', 'M11 8l7-7', 'stroke-dasharray="2 1"'),
      t2: lines('k', 'M1 2l18 16M19 2L1 18'),
      t3: lines('k', 'M1 18L9 11l2-8M9 11l10 3'),
      t4: lines('k', 'M6 1v18M14 1v18') + lines('b', 'M1 6h18M1 13h18', 'stroke-dasharray="2 1"'),
      b1: lines('k', 'M1 4h6c6 0 6 13 0 13H1') + '<path class="kf" d="M18 3l-7 7 1-4 3-3zM11 10l5-1-2-3z"/>',
      b2: lines('k', 'M1 4h6v13H1') + lines('b', 'M9 14l3-5', 'stroke-dasharray="1 1"') + '<path class="kf" d="M11 8l6-3 0 6z"/>',
      f1: lines('k', 'M1 3h8c5 0 7 4 7 15') + lines('b', 'M14 3l5-2M16 8v7', 'stroke-dasharray="1 1"'),
      f2: lines('k', 'M1 9c6 0 8 2 8 10') + lines('g', 'M9 9l8-8M12 3l6 6', 'stroke-dasharray="1 1"') + lines('b', 'M10 8c3 0 6-1 8-3', 'stroke-dasharray="2 1"'),
      f3: lines('k', 'M1 3c8 0 14 5 14 16') + lines('b', 'M14 0v14M18 1l-6 6', 'stroke-dasharray="1 1"'),
      nb: lines('b', 'M3 8l11 10') + n(3, 8) + n(14, 18) + bulb(14, 5),
      l2: lines('b', 'M3 17L16 4') + n(3, 17, 2.2) + n(17, 3, 2.2),
      chev: lines('k', 'M1 12l9-7 9 7M1 17l9-7 9 7') + lines('b', 'M4 9l6-5 6 5'),
      zig: lines('k', 'M0 18L5 3l7 14') + '<path stroke="#e4cf3a" stroke-width="3.5" d="M18 2l-6 12"/><path d="M10 18l1-4 3 2z" fill="#333"/>',
      zigr: '<path stroke="#c5202a" stroke-width="1.4" d="M0 17L5 6l4 11 5-11"/><path stroke="#c5202a" stroke-width="4" d="M18 2l-4 8"/>',
      wave: lines('k', 'M1 18C3 2 9-1 10 10s7 10 9-9', 'stroke-width="1.2"'),
      tree: lines('b', 'M3 10L16 2M3 10h13M3 10l13 8') + n(3, 10, 2.4) + n(17, 2, 2.2) + n(17, 18, 2.2),
      hk: lines('k', 'M1 3v14M1 10h8') + lines('k', 'M19 2c-6 4-6 12 0 16'),
      ang: lines('k', 'M1 19l18-7') + lines('b', 'M7 3v13') + n(7, 3, 2.2) + n(7, 16, 2),
      star1: star(10, 10, 9),
      star4: '<g opacity=".55">' + star(5, 5, 4.5).replace(/#3a72b8/g, '#8a6a4a') + star(15, 5, 4.5).replace(/#3a72b8/g, '#8a6a4a') + star(15, 15, 4.5).replace(/#3a72b8/g, '#8a6a4a') + '</g>' + star(5, 15, 4.5),
      stara: star(14, 5, 5) + star(5, 15, 4.5) + up(14, 12),
      star0: star(9, 12, 7.5) + tx(13, 8, 10, '#222', '0', 'style="font-family:\'Liberation Sans\'"'),
      starq: star(8, 12, 7.5) + tx(12, 9, 13, '#d02ab0', '?', 'font-weight="700"'),
      arrne: lines('k', 'M1 19L16 4', 'stroke-width="1.3"') + '<path stroke="#222" fill="#dce9f8" d="M19 1l-9 3 6 6z"/>',
      star6: star(4, 4, 3.5) + star(10, 4, 3.5) + star(16, 4, 3.5) + star(5, 14, 4.5) + up(14, 11),
      table: '<rect x="1" y="1" width="18" height="18" stroke="#111" stroke-width="1.3"/><path d="M1 7h18M1 13h18M10 1v18" stroke="#111" stroke-width="1.3"/><path d="M10 1h9v6h-9zM1 7h9v6H1z" fill="#aaa" opacity=".5"/>',

      // left palette
      selarrow: '<path class="kf" d="M5 1l11 9-5 .6 3.5 6.5-2.6 1.4L8.6 12l-3.6 3z"/>',
      dashbox: '<rect x="1" y="1" width="18" height="16" stroke="#111" stroke-dasharray="2 1.6" stroke-width="1.3"/>',
      crossp: lines('b', 'M10 2v16M2 10h16') + '<circle cx="10" cy="10" r="2.5" class="b"/>',
      rectb: '<rect class="bl" x="1" y="3" width="17" height="13" stroke-width="1.4"/>',
      arcb: lines('k', 'M-2 18c10 0 16-5 17-14'),
      circb: '<circle class="bl" cx="9" cy="10" r="9" stroke-width="1.4"/>',
      tag: '<rect x="-1" y="1" width="8" height="17" stroke="#111"/><path d="M-1 6h8M-1 10h8M-1 14h8" stroke="#111"/><path class="bl" d="M8 5h7l5 5-5 5H8z"/>',
      bigA: tx(1, 18, 20, '#b3262e', 'A', 'font-weight="700"'),
      measp: '<rect x="-1" y="13" width="22" height="3" fill="#e8e09a" stroke="#b7ad5b"/>' + lines('b', 'M6 7h8') + n(3, 7, 2) + n(17, 7, 2),
      dimp: lines('r', 'M1 0v14M19 0v14M3 4h15') + lines('k', 'M0 17h20') + up(9, 8),
      copyb: '<rect class="b" x="9" y="1" width="10" height="7"/><rect class="b" x="-2" y="11" width="10" height="7"/>' + up(14, 9),
      redx: '<path stroke="#c8181e" stroke-width="2.6" d="M1 2l18 16M19 2L1 18"/>',
      clip: '<rect x="1" y="3" width="13" height="15" fill="#8a7a3a" stroke="#333"/><rect x="4" y="0" width="6" height="4" fill="#555"/><path d="M9 8h7l3 3v8H9z" fill="#fff" stroke="#222"/><path d="M11 12h6M11 15h6" stroke="#222"/>',

      // bottom bar
      back: '<circle cx="10" cy="10" r="9" fill="#b9b9b9" stroke="#9a9a9a"/><path d="M11 4l-6 6 6 6v-4h5V8h-5z" fill="#f2f2f2"/>',
      fwd: '<circle cx="10" cy="10" r="9" fill="#b9b9b9" stroke="#9a9a9a"/><path d="M9 4l6 6-6 6v-4H4V8h5z" fill="#f2f2f2"/>',
      sail: '<path d="M9 1v13L1 17l18 1-6-3z" fill="#dcdcdc" stroke="#a8a8a8"/><path d="M10 3l6 10h-6z" fill="#efefef" stroke="#aaa"/>',
      winset: '<rect x="1" y="1" width="12" height="12" fill="#dce9f8" stroke="#345"/><rect x="6" y="6" width="13" height="12" fill="#f4f4f4" stroke="#345"/><path d="M8 10h9" stroke="#3a72b8" stroke-width="2"/>',

      // raster manager
      rtree: lines('k', 'M3 2v16M3 4h5M3 10h5M3 16h5M10 4h8M10 10h8M10 16h8', 'stroke-dasharray="3 1"'),
      rsort: lines('b', 'M3 2v15') + '<path d="M3 19l-3-4h6z" fill="#3a72b8"/>' + lines('k', 'M9 4h8M9 10h8M9 16h8'),
      rmap: '<rect x="2" y="3" width="16" height="16" fill="#e7f0c8" stroke="#444"/><path d="M2 8l8 4 8-6M8 3l4 16" stroke="#3a72b8"/><path d="M3 0l3 3-2 3-3-3z" fill="#d8632a"/>',
      rfold: '<path d="M0 4h6l2 2h8v11H0z" fill="#f0dc90" stroke="#b59a4b"/>' + rg(8, 8, 5.5),
      r1: rg(1, 1, 9) + '<path d="M5 12l5-4v3h5v-3l-5-4M15 8l-5 4v-3" stroke="#111" fill="none" stroke-width="1.4"/>',
      r2: '<rect x="3" y="1" width="16" height="18" stroke="#222" stroke-dasharray="1 1"/>' + rg(2, 1, 6) + '<path class="kf" d="M8 6l8 6-3 .5 3 5-2 1-3-5-3 2z"/>',
      r3: rg(1, 1, 6) + rg(1, 10, 5) + rg(10, 10, 5),
      r4: rg(1, 3, 7) + rg(1, 11, 4) + '<path d="M10 8l8-7" stroke="#333"/><path class="kf" d="M19 0l-5 1 3 3z"/>',
      r5: rg(1, 1, 6) + rg(1, 11, 4) + '<path stroke="#c22" stroke-width="2" d="M3 1l15 18M18 3L4 18"/>',
      r6: rg(3, 0, 5) + '<path d="M6 12l6 6 6-7-6-6z" stroke="#555" stroke-dasharray="1 1"/><path stroke="#222" d="M1 13l4 5M12 2l6 3"/><path class="kf" d="M18 2v5l-3-3zM0 18v-5l3 3z"/>',
      r7: rg(8, 0, 5) + '<rect x="0" y="9" width="9" height="10" stroke="#222" stroke-dasharray="1 1"/>' + up(13, 11),
      r8: '<rect x="3" y="1" width="16" height="18" stroke="#222" stroke-dasharray="1 1"/>' + rg(3, 8, 5) + '<path class="kf" d="M15 3l-6 1 4 4z"/>',
      r9: '<rect x="1" y="8" width="9" height="11" stroke="#222" stroke-dasharray="1 1"/><path d="M11 1l7 6-5 7-7-6z" fill="#0b8ad8"/><path d="M13 9l5-2-5 7z" fill="#3be06a"/>' + up(5, 1),
      r10: '<path d="M8 7L1 19h7z" stroke="#222" stroke-dasharray="1 1"/><path d="M12 8l6 11h-6z" fill="#1ab06a" stroke="#16508a"/>' + up(9, 0),
      r11: '<rect x="1" y="0" width="12" height="8" stroke="#222" stroke-dasharray="1 1"/><path d="M8 10h12l-5 9H3z" fill="#0b8ad8"/><path d="M6 14h10l-3 5H3z" fill="#3be06a"/>' + up(12, 3),
      r12: '<path d="M1 19V9l5-6 4 8 4-9 5 7v10z" fill="#1fb75a" stroke="#15603a"/><path d="M5 12l5 7H3z" fill="#0b8ad8"/>',
      r13: rg(0, 0, 7) + '<circle cx="12" cy="11" r="7.5" fill="#cfe0f2" stroke="#234"/>' + tx(7.5, 15, 10, '#123', '1:1', 'style="font-family:\'Liberation Sans\'"') + '<path d="M16 17l3 3" stroke="#d08a3a" stroke-width="2"/>',
      r14: '<circle cx="10" cy="10" r="9" fill="#fff" stroke="#333"/><path d="M10 1a9 9 0 0 1 0 18z" fill="#333"/><path d="M1 10h18M6 2v16M14 2v16M10 1v18" stroke="#999"/>',

      copies: '<rect x="5" y="1" width="8" height="9" fill="#f4f4f4" stroke="#8a8a8a"/><rect x="1" y="4" width="8" height="9" fill="#fff" stroke="#8a8a8a"/>',
      filei: '<circle cx="8" cy="8" r="7.5" fill="#fff" stroke="#2a73c8"/><path d="M8 3.5v1.5M8 7v6" stroke="#2a63b0" stroke-width="2"/>' + rg(9, 9, 4),
      noentry: '<circle cx="8" cy="8" r="7.6" fill="#c33" stroke="#822"/><circle cx="8" cy="8" r="4.4" fill="#f2dcdc"/><path d="M5 5l6 6" stroke="#a11" stroke-width="2"/>',
      fade1: '<path d="M7 1h3v6H7z" fill="#999"/><path d="M3 7h10l3 8H0z" fill="#bbb"/>',
      fade2: '<circle cx="8" cy="8" r="7" fill="#ccc" stroke="#aaa"/><circle cx="8" cy="8" r="4" fill="#aaa"/>',
      fade3: '<rect x="1" y="1" width="6" height="14" fill="#999"/><rect x="7" y="7" width="8" height="8" fill="#bbb"/>',
      fade4: '<rect x="1" y="1" width="14" height="14" fill="#999"/><path d="M4 8h3M9 8h3M8 4v8" stroke="#fff"/>',
      tasks: '<path d="M4 9l4-6 6 3-1 6H2z" fill="#aac8e6" stroke="#4a7eb4"/><path d="M1 14h14" stroke="#4a7eb4" stroke-width="2"/>',
      earth: '<circle cx="8" cy="8" r="7" fill="#1b6fc8"/><path d="M5 3l5 2-1 4-4 1zM11 10l2 2-2 2z" fill="#e8eef5"/>',
      nosym: '<circle cx="10" cy="10" r="9" fill="#e9f0f8" stroke="#d88" stroke-width="2.4"/><rect x="5" y="5" width="10" height="10" fill="#3f6aa6"/><path d="M5 5l10 10" stroke="#a9c1de"/>',
      grayptr: '<rect x="1" y="1" width="14" height="17" fill="#d4d4d4" stroke="#aaa"/><path d="M6 7l11 9-5 .4 3 5-3 1-2-5-4 3z" fill="#5f5f5f"/>',
      mslogo: '<rect x="1" y="1" width="14" height="15" fill="#3a6fa8"/><path d="M4 16V4h3l1 6 2-6h2l1 12" stroke="#cfe3f7" stroke-width="1.5"/>',
      rastlogo: '<g transform="translate(1 1)">' + rg(0, 0, 7) + '</g>'
    };

    const svg = (name, size = 20) => `<svg class="ic" width="${size}" height="${size}" viewBox="0 0 20 20">${icons[name] || ''}</svg>`;

    // things in a bar that are not plain icons; [width, html]
    const parts = {
      caret: [8, '<div class="caret"></div>'],
      csm: [6, '<div class="caret caret-sm"></div>'],
      sep: [1, '<div class="tb-sep"></div>'],
      grip: [2, '<div class="tb-grip"></div>'],
      zero: [8, '<div class="zero">0</div>'],
      combo: [80, '<div class="combo w-100 justify-content-end"><div class="caret"></div></div>'],
      views: [127, '<div class="combo w-100"><span class="d-flex align-items-center gap-2" style="letter-spacing:-.3px"><svg class="ic" width="14" height="14"><rect x="1" y="1" width="8" height="8" fill="#fff" stroke="#3a72b8"/><rect x="5" y="5" width="8" height="8" fill="#fff" stroke="#3a72b8"/></svg>Default Views</span><div class="caret"></div></div>'],
      nums: [110, '<div class="d-flex"><div class="num" style="background:linear-gradient(#fbe0b2,#f3b35e)">1</div><div class="num">2</div><div class="num">3</div><div class="num">4</div><div class="num">5</div><div class="num">6</div><div class="num">7</div><div class="num">8</div></div>'],
      xl: [14, '<div class="axis">X</div>'],
      yl: [14, '<div class="axis">Y</div>'],
      xin: [136, '<input class="form-control coord" value="1390813.835" disabled>'],
      yin: [137, '<input class="form-control coord w-100" value="14753257.384" disabled>']
    };

    // a bar is a list of groups [from, to, "centre:name centre:name ..."], all in picture x
    function bar(el, originX, groups, size, groupClass) {
      let pos = originX, html = '';
      for (const [from, to, list] of groups) {
        let x = from, inner = '';
        for (const item of list.split(' ')) {
          const [c, name, mode] = item.split(':');
          const p = parts[name];
          const w = p ? p[0] : size;
          const gap = (c - w / 2) - x;
          const state = mode === 'on' ? 'on' : mode === 'key' ? 'snap-on' : '';
          inner += `<div class="cell ${state}" style="width:${w}px;margin-left:${gap}px">${p ? p[1] : svg(name, size)}</div>`;
          x = c - w / 2 + w;
        }
        html += `<div class="${groupClass} d-flex align-items-center" style="width:${to - from}px;margin-left:${from - pos}px">${inner}</div>`;
        pos = to;
      }
      el.innerHTML = html;
    }

    bar(document.getElementById('row1'), 0, [
      [100, 541, '143:combo 187:sep 204:color 228:zero 247:caret 257:sep 273:lstyle 298:zero 318:caret 328:sep 344:weight 370:zero 389:caret 399:sep 417:globe 441:zero 460:caret 471:sep 486:tri 512:zero 531:caret'],
      [544, 1025, '546:grip 565:bluebox 587:caret 609:doc 630:caret 652:refs 673:caret 695:blob 716:caret 738:pict 759:caret 780:greens 802:caret 823:yellows 845:caret 866:starmag 888:caret 908:views3 931:caret 952:info 981:cross 1009:nope'],
      [1029, 1563, '1031:grip 1049:vlist 1071:caret 1092:cube 1103:csm 1121:sun 1142:caret 1153:sep 1170:brush 1197:zin 1224:zout 1252:zwin 1280:fit 1309:rotate 1336:hand 1366:feet 1383:sep 1399:prev 1427:next 1444:sep 1461:copyv 1490:cone 1518:cubex 1546:cubew'],
      [1566, 1659, '1568:grip 1587:hatch 1614:xhatch 1643:xhdel']
    ], 20, 'tb-group');

    bar(document.getElementById('row2'), 0, [
      [100, 373, '130:d1 155:d2 182:d3 211:d4 239:d5 268:d6 293:d7 323:d8 357:d000'],
      [376, 701, '378:grip 398:snapx:on 432:s1 460:skey:key 486:s2 515:s3 543:s4 571:s5 599:s6 628:s7 656:s8 683:s9'],
      [704, 1046, '706:grip 724:c1 752:c2 770:sep 786:c3 815:c4 831:sep 848:c5 876:c6 905:c7 932:c8 960:c9 978:sep 994:c10 1012:sep 1030:bulbstar'],
      [1049, 1260, '1051:grip 1070:bulbstar 1097:e1 1126:e2 1155:e3 1171:sep 1188:grid 1215:gridx 1244:ring'],
      [1264, 1479, '1266:grip 1285:palette 1312:cell1 1340:cell2 1370:sat 1386:sep 1402:trowel 1419:sep 1436:pal2up 1463:pal2b'],
      [1484, 1662, '1486:grip 1505:m1 1533:m2 1561:m3 1590:m4 1617:m5 1645:m6']
    ], 20, 'tb-group');

    bar(document.getElementById('row3'), 0, [
      [40, 469, '66:Aup 96:Aup 123:bigC 144:sep 161:qABC 188:Aup 216:Aa 244:one 262:sep 280:a1a 306:a1a1 335:a1a2 362:dabc 390:dlines 420:fx 435:sep 453:B'],
      [472, 662, '474:grip 491:crv 511:sep 527:p1 554:p2 572:sep 589:a1 617:a2 647:a3'],
      [666, 1011, '668:grip 687:boxarr 717:delx 743:rstar 771:t1 799:t2 826:t3 855:t4 883:b1 912:b2 939:f1 966:f2 996:f3'],
      [1015, 1282, '1017:grip 1035:nb 1064:l2 1091:chev 1118:zig 1147:zigr 1175:wave 1193:sep 1208:tree 1238:hk 1265:ang'],
      [1286, 1531, '1288:grip 1306:star1 1335:star4 1362:stara 1390:star0 1417:starq 1447:arrne 1464:sep 1480:star6 1498:sep 1515:table']
    ], 20, 'tb-group');

    bar(document.getElementById('viewtools'), 59, [
      [59, 440, '70:vlist 89:caret 109:cube 115:csm 129:sun 148:caret 159:sep 172:brush 193:zin 215:zout 237:zwin 260:fit 282:rotate 304:hand 318:sep 333:prev 354:next 368:sep 383:copyv 404:cubex 425:cubew']
    ], 16, 'view-tools');

    bar(document.getElementById('rmtools'), 615, [
      [615, 1180, '632:rtree 651:caret 675:rsort:on 691:sep 708:rmap 729:caret 752:rfold 773:caret 795:r1 823:r2 851:r3 880:r4 908:r5 937:r6 964:r7 993:r8 1020:r9 1049:r10 1078:r11 1105:r12 1134:r13 1161:r14']
    ], 20, 'rm-tools');

    bar(document.getElementById('bottom'), 0, [
      [0, 296, '15:back 36:csm 58:fwd 79:csm 100:sail 121:csm 195:views 264:sep 279:winset'],
      [296, 781, '356:nums 419:grip 441:xl 521:xin 598:sep 615:yl 695:yin']
    ], 20, 'bt-group');

    // left palette, stacked by y
    const palette = [[148,'selarrow'],[178,'dashbox'],[207,'crossp'],[234,'nb'],[262,'hatch'],[291,'rectb'],[319,'arcb'],[348,'circb'],[376,'tag'],[404,'bigA'],[433,'bulbstar'],[460,'star1'],[488,'measp'],[516,'dimp'],[542,'palette'],[573,'copyb'],[600,'redx'],[628,'boxarr']];
    let y = 145, pHtml = '';
    palette.forEach(([top, name], i) => {
      pHtml += `<div class="pal-cell ${i === 0 ? 'pal-first' : ''}" style="margin-top:${top - y}px">${svg(name, 20)}</div>`;
      y = top + (i === 0 ? 28 : 20);
    });
    document.getElementById('pal').innerHTML = pHtml;
    document.getElementById('pal2').innerHTML = `<div class="pal-cell plain" style="margin-top:4px">${svg('clip', 20)}</div>`;

    // small icons placed straight in the markup
    const small = { copies: 14, filei: 18, noentry: 16, fade1: 16, fade2: 16, fade3: 16, fade4: 16, tasks: 17, earth: 16, nosym: 20, grayptr: 20, mslogo: 16, rastlogo: 16 };
    const ownBox = ['copies', 'filei', 'noentry', 'fade1', 'fade2', 'fade3', 'fade4', 'tasks', 'earth', 'mslogo'];
    document.querySelectorAll('[data-i]').forEach(s => {
      const name = s.dataset.i, size = small[name] || 20, box = ownBox.includes(name) ? 16 : 20;
      s.innerHTML = `<svg class="ic" width="${size}" height="${size}" viewBox="0 0 ${box} ${box}">${icons[name]}</svg>`;
    });
  </script>

  <script src="https://cdn.jsdelivr.net/npm/bootstrap@5.3.3/dist/js/bootstrap.bundle.min.js"></script>
</body>
</html>
